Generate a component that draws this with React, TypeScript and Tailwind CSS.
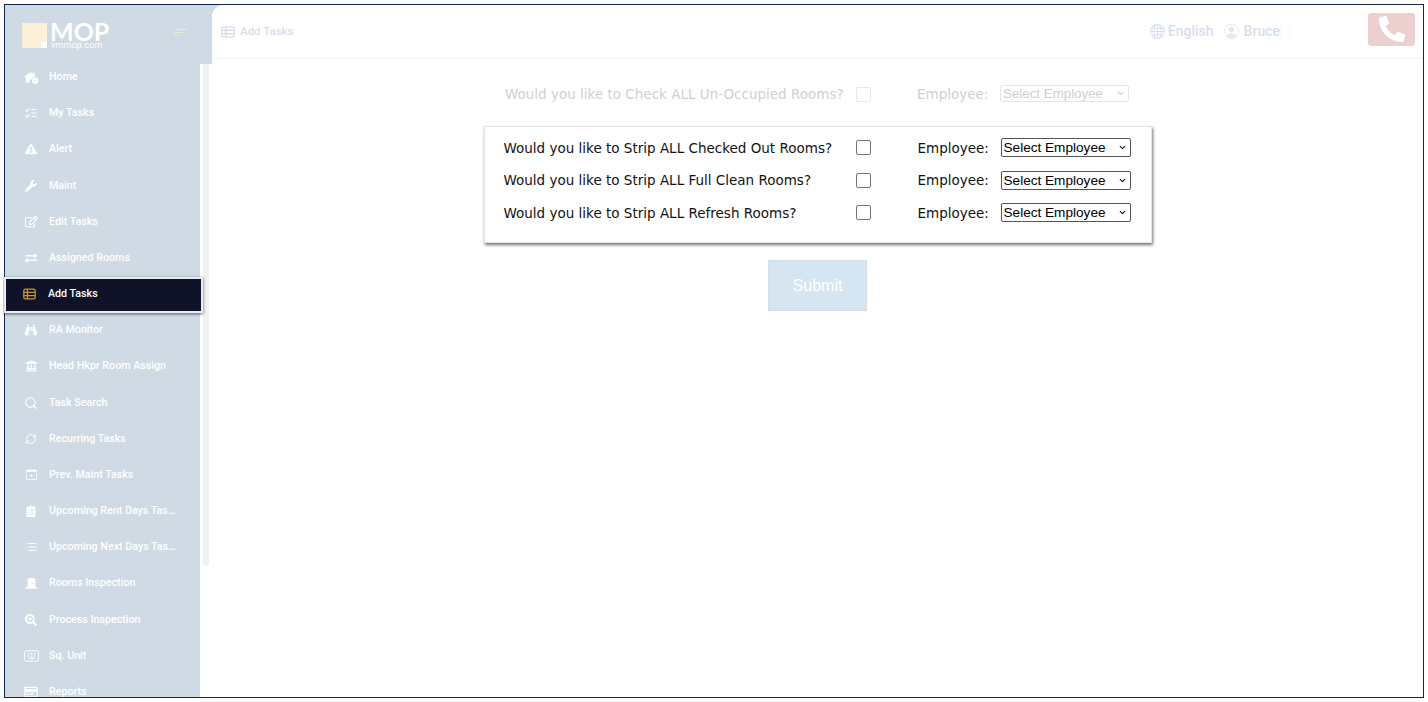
// Add Tasks screen: dimmed sidebar and header, one highlighted strip-rooms card
import type { ComponentType } from 'react'
import {
  FaBinoculars,
  FaClipboardList,
  FaExchangeAlt,
  FaExclamationTriangle,
  FaLandmark,
  FaPhoneAlt,
  FaRegCreditCard,
  FaRegEdit,
  FaSearchPlus,
  FaWrench,
  FaDoorClosed,
} from 'react-icons/fa'
import { BsCalendarPlus, BsGlobe, BsPersonCircle } from 'react-icons/bs'
import { LuChevronDown, LuList, LuListChecks, LuRefreshCw, LuSearch } from 'react-icons/lu'

type IconType = ComponentType<{ className?: string }>

function HomeCheck({ className }: { className?: string }) {
  return (
    <svg viewBox="0 0 24 20" fill="currentColor" className={className}>
      <path d="M10 1 0 9.5h3V18h6v-5h3.4a6 6 0 0 1 5.6-3.9l1 .1L17 7.4V2.5h-3v2.2z" />
      <circle cx="18" cy="15" r="5" />
      <path d="m15.6 15 1.7 1.7 3-3" fill="none" stroke="#cfdae5" strokeWidth="1.3" />
    </svg>
  )
}

function TableIcon({ className }: { className?: string }) {
  return (
    <svg viewBox="0 0 16 14" fill="none" stroke="currentColor" strokeWidth="1.6" className={className}>
      <rect x="1" y="1" width="14" height="12" rx="2" />
      <path d="M1 5h14M1 9h14M5.5 1v12" />
    </svg>
  )
}

function KeyboardIcon({ className }: { className?: string }) {
  return (
    <svg viewBox="0 0 16 12" fill="none" stroke="currentColor" strokeWidth="1" className={className}>
      <rect x="0.5" y="0.5" width="15" height="11" rx="2" />
      <path d="M4 3.5h1.5M7.2 3.5h1.6M10.5 3.5H12M4 6h1.5M7.2 6h1.6M10.5 6H12M5 8.6h6" strokeWidth="1.4" />
    </svg>
  )
}

const menu: { label: string; icon: IconType; size: string }[] = [
  { label: 'Home', icon: HomeCheck, size: 'w-[15px] h-[13px]' },
  { label: 'My Tasks', icon: LuListChecks, size: 'w-[14px] h-[14px]' },
  { label: 'Alert', icon: FaExclamationTriangle, size: 'w-[12px] h-[12px]' },
  { label: 'Maint', icon: FaWrench, size: 'w-[12px] h-[12px]' },
  { label: 'Edit Tasks', icon: FaRegEdit, size: 'w-[13px] h-[13px]' },
  { label: 'Assigned Rooms', icon: FaExchangeAlt, size: 'w-[12px] h-[12px]' },
  { label: 'Add Tasks', icon: TableIcon, size: 'w-[13px] h-[12px]' },
  { label: 'RA Monitor', icon: FaBinoculars, size: 'w-[12px] h-[12px]' },
  { label: 'Head Hkpr Room Assign', icon: FaLandmark, size: 'w-[11px] h-[12px]' },
  { label: 'Task Search', icon: LuSearch, size: 'w-[14px] h-[14px]' },
  { label: 'Recurring Tasks', icon: LuRefreshCw, size: 'w-[12px] h-[12px]' },
  { label: 'Prev. Maint Tasks', icon: BsCalendarPlus, size: 'w-[11px] h-[11px]' },
  { label: 'Upcoming Rent Days Tasks List', icon: FaClipboardList, size: 'w-[10px] h-[12px]' },
  { label: 'Upcoming Next Days Tasks List', icon: LuList, size: 'w-[14px] h-[14px]' },
  { label: 'Rooms Inspection', icon: FaDoorClosed, size: 'w-[13px] h-[13px]' },
  { label: 'Process Inspection', icon: FaSearchPlus, size: 'w-[12px] h-[12px]' },
  { label: 'Sq. Unit', icon: KeyboardIcon, size: 'w-[15px] h-[12px]' },
  { label: 'Reports', icon: FaRegCreditCard, size: 'w-[14px] h-[12px]' },
]

const stripRows = [
  'Would you like to Strip ALL Checked Out Rooms?',
  'Would you like to Strip ALL Full Clean Rooms?',
  'Would you like to Strip ALL Refresh Rooms?',
]

function Sidebar() {
  return (
    <aside className="w-[207px] shrink-0 flex flex-col bg-[#cfdae5] font-['Roboto',sans-serif]">
      <div className="h-[59px] shrink-0 flex items-start pl-[17px] pt-[18px]">
        <div className="relative w-[25px] h-[25px] bg-[#fdf0d9]">
          <div className="absolute right-0 bottom-0 w-[6px] h-[6px] bg-white" />
        </div>
        <div className="ml-[3px] flex flex-col text-white">
          <span className="font-['Lato',sans-serif] font-bold text-[25px] leading-[16px] h-[16px]">MOP</span>
          <span className="ml-[1px] text-[9.2px] leading-[9px] mt-[1px]">vmmop.com</span>
        </div>
        <div className="ml-auto mr-[25px] mt-[6px] flex flex-col gap-[2px]">
          <div className="w-[13px] h-[1px] bg-[#ece8d4]" />
          <div className="w-[9px] h-[1px] bg-[#ece8d4]" />
          <div className="w-[5px] h-[1px] bg-[#ece8d4]" />
        </div>
      </div>
      <div className="flex-1 min-h-0 flex overflow-hidden -ml-[2px] pl-[2px]">
        <nav className="w-[195px] shrink-0 -mt-[5px]">
          {menu.map(item => {
            const Icon = item.icon
            const active = item.label === 'Add Tasks'
            return active ? (
              <div
                key={item.label}
                className="relative z-10 w-[199px] -ml-px mt-px -mb-px h-[36.18px] pb-[2px] flex items-center bg-[#0f1228] border-2 border-[#e9ebee] shadow-[0_1px_3px_rgba(0,0,0,0.6)] text-white font-medium text-[10.7px]"
              >
                <span className="w-[42px] flex justify-center pl-[5px] text-[#c6982f]">
                  <Icon className={item.size} />
                </span>
                <span>{item.label}</span>
              </div>
            ) : (
              <div key={item.label} className="h-[36.18px] flex items-center text-white font-medium text-[10.7px]">
                <span className="w-[44px] flex justify-center pl-[8px]">
                  <Icon className={item.size} />
                </span>
                <span className="w-[128px] truncate">{item.label}</span>
              </div>
            )
          })}
        </nav>
        <div className="flex-1 bg-white pl-[3px] pr-[3px]">
          <div className="w-[6px] h-[502px] bg-[#f1f1f1] rounded-b-[3px]" />
        </div>
      </div>
    </aside>
  )
}

function Topbar() {
  return (
    <header className="h-[54px] shrink-0 flex items-center border-b border-[#f1f2f4] bg-white pl-[9px] pr-[8px] font-['Roboto',sans-serif]">
      <TableIcon className="w-[14px] h-[12px] text-[#d6dfeb]" />
      <span className="ml-[5px] text-[11.5px] font-medium text-[#d6dfeb]">Add Tasks</span>
      <div className="ml-auto flex items-center text-[#d6dfeb] text-[14px] font-medium">
        <BsGlobe className="w-[15px] h-[15px]" />
        <span className="ml-[3px]">English</span>
        <BsPersonCircle className="ml-[10px] w-[15px] h-[15px] text-[#e7e9ec]" />
        <span className="ml-[5px]">Bruce</span>
        <div className="w-[10px] h-[22px] border-x border-[#f9f9f9]" />
        <div className="ml-[78px] mb-[5px] w-[47px] h-[33px] rounded-[3px] bg-[#eccfcf] flex items-center justify-center">
          <FaPhoneAlt className="w-[26px] h-[26px] text-white" />
        </div>
      </div>
    </header>
  )
}

function EmployeeSelect({ disabled }: { disabled?: boolean }) {
  return (
    <div className={disabled ? 'relative mb-[2px]' : 'relative'}>
      <select
        disabled={disabled}
        className={
          disabled
            ? "block w-[129px] h-[17px] pl-[2px] border border-[#e6e6e6] rounded-[2px] bg-white text-[#cfcfcf] opacity-100 text-[13.33px] leading-[15px] font-['Liberation_Sans',sans-serif] appearance-none"
            : "block w-[130px] h-[19px] pl-[2px] border border-[#555] rounded-[2px] bg-white text-black text-[13.6px] leading-[15px] font-['Liberation_Sans',sans-serif] appearance-none"
        }
      >
        <option>Select Employee</option>
      </select>
      <LuChevronDown
        strokeWidth={3.5}
        className={
          disabled
            ? 'absolute right-[4px] top-[4px] w-[9px] h-[9px] text-[#cfcfcf]'
            : 'absolute right-[4px] top-[5px] w-[9px] h-[9px] text-[#222]'
        }
      />
    </div>
  )
}

function Row({ text, dim }: { text: string; dim?: boolean }) {
  return (
    <div className={dim ? 'flex items-center text-[#d0d0d0]' : 'flex items-center text-[#111]'}>
      <span className={dim ? 'pl-px w-[352px] shrink-0 whitespace-nowrap' : 'w-[352px] shrink-0 whitespace-nowrap'}>
        {text}
      </span>
      <span
        className={
          dim
            ? 'w-[15px] h-[15px] rounded-[2px] border border-[#e8e8e8] bg-white'
            : 'w-[15px] h-[15px] rounded-[2px] border border-[#777] bg-white'
        }
      />
      <span className={dim ? 'ml-[46px] w-[83px] shrink-0' : 'ml-[47px] w-[83px] shrink-0'}>Employee:</span>
      <EmployeeSelect disabled={dim} />
    </div>
  )
}

export default function App() {
  return (
    <div className="w-[1428px] h-[702px] bg-white p-[4px] overflow-hidden">
      <div className="w-full h-[694px] flex border border-[#14264f] bg-[#cfdae5]">
        <Sidebar />
        <main className="flex-1 min-w-0 flex flex-col bg-white rounded-tl-[12px] overflow-hidden">
          <Topbar />
          <div className="flex-1 flex flex-col items-center font-['DejaVu_Sans',sans-serif] text-[13.5px] pt-[26px]">
            <div className="w-[627px] h-[18px] flex items-center">
              <Row text="Would you like to Check ALL Un-Occupied Rooms?" dim />
            </div>
            <div className="mt-[23px] w-[668px] h-[117px] bg-white border border-[#e4e4e4] shadow-[1px_2px_3px_rgba(0,0,0,0.55)] pl-[19px] pt-[11.5px] flex flex-col gap-[14px]">
              {stripRows.map(r => (
                <div key={r} className="h-[18.5px] flex items-center">
                  <Row text={r} />
                </div>
              ))}
            </div>
            <button className="mt-[17px] w-[99px] h-[51px] bg-[#d6e5f2] border border-[#d8dde2] text-white text-[16px] font-['Liberation_Sans',sans-serif]">
              Submit
            </button>
          </div>
        </main>
      </div>
    </div>
  )
}
